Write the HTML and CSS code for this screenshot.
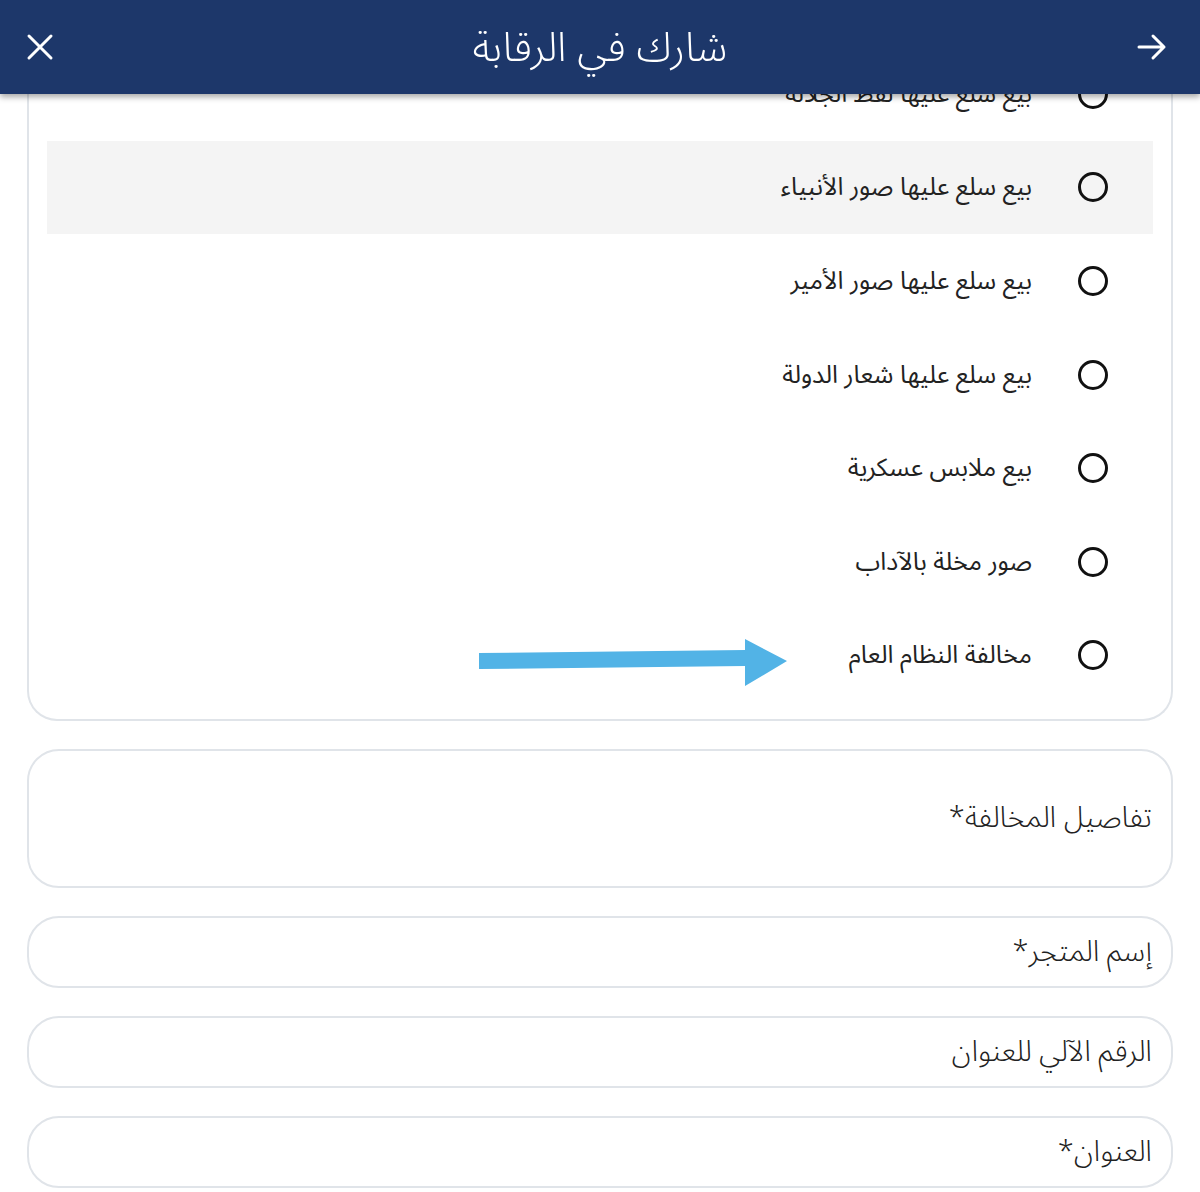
FILE: index.html
```html
<!DOCTYPE html>
<html lang="ar" dir="rtl">
<head>
<meta charset="utf-8">
<title>شارك في الرقابة</title>
<link rel="stylesheet" href="styles.css">
</head>
<body>
<header class="topbar">
  <button class="icon-btn back" aria-label="رجوع">
    <svg width="34" height="34" viewBox="0 0 34 34"><path d="M4 17H29M18 6L29 17L18 28" fill="none" stroke="#fff" stroke-width="3" stroke-linecap="round" stroke-linejoin="round"/></svg>
  </button>
  <h1 class="title">شارك في الرقابة</h1>
  <button class="icon-btn close" aria-label="إغلاق">
    <svg width="30" height="30" viewBox="0 0 30 30"><path d="M4 4L26 26M26 4L4 26" fill="none" stroke="#fff" stroke-width="3" stroke-linecap="round"/></svg>
  </button>
</header>

<main class="page">
  <section class="card">
    <div class="opt"><span class="radio"></span><span class="opt-text">بيع سلع عليها لفظ الجلالة</span></div>
    <div class="opt opt-active"><span class="radio"></span><span class="opt-text">بيع سلع عليها صور الأنبياء</span></div>
    <div class="opt"><span class="radio"></span><span class="opt-text">بيع سلع عليها صور الأمير</span></div>
    <div class="opt"><span class="radio"></span><span class="opt-text">بيع سلع عليها شعار الدولة</span></div>
    <div class="opt"><span class="radio"></span><span class="opt-text">بيع ملابس عسكرية</span></div>
    <div class="opt"><span class="radio"></span><span class="opt-text">صور مخلة بالآداب</span></div>
    <div class="opt"><span class="radio"></span><span class="opt-text">مخالفة النظام العام</span></div>
    <svg class="pointer" width="312" height="50" viewBox="0 0 312 50"><polygon points="0,14 266,11 266,0 308,22 266,47 266,27 0,30" fill="#52b3e6"/></svg>
  </section>

  <div class="field field-tall"><span class="label">تفاصيل المخالفة*</span></div>
  <div class="field"><span class="label">إسم المتجر*</span></div>
  <div class="field"><span class="label">الرقم الآلي للعنوان</span></div>
  <div class="field"><span class="label">العنوان*</span></div>
</main>
</body>
</html>
```
FILE: styles.css
```css
* { box-sizing: border-box; }
html, body { margin: 0; padding: 0; }
body {
  background: #fff;
  font-family: "Noto Sans Arabic", "DejaVu Sans", "Noto Sans", sans-serif;
  color: #1f1f1f;
  overflow: hidden;
}
.topbar {
  position: fixed;
  top: 0; left: 0; right: 0;
  height: 94px;
  background: #1d376a;
  display: grid;
  grid-template-columns: 1fr auto 1fr;
  align-items: center;
  padding: 0 30px 0 22px;
  box-shadow: 0 3px 6px rgba(0,0,0,0.35);
  z-index: 10;
}
.icon-btn {
  background: none;
  border: 0;
  padding: 0;
  width: 36px;
  height: 36px;
  display: flex;
  align-items: center;
  justify-content: center;
}
.back { justify-self: start; }
.close { justify-self: end; }
.title {
  margin: 0;
  color: #fff;
  font-weight: 300;
  font-size: 41px;
  line-height: 1;
  padding-top: 2px;
  transform: translateX(4px);
}
.page {
  display: flex;
  flex-direction: column;
  gap: 28px;
  padding: 0 27px;
}
.card {
  position: relative;
  border: 2px solid #e0e4e9;
  border-top: 0;
  border-radius: 0 0 30px 30px;
  padding: 47px 18px 17px;
}
.opt {
  height: 93.6px;
  display: flex;
  align-items: center;
  padding-right: 45px;
  gap: 46px;
}
.opt-active { background: #f4f4f4; }
.radio {
  width: 30px;
  height: 30px;
  border: 3px solid #111;
  border-radius: 50%;
  flex: none;
}
.opt-text {
  font-size: 25px;
  color: #222;
}
.pointer {
  position: absolute;
  left: 450px;
  top: 639px;
}
.field {
  border: 2px solid #e0e4e9;
  border-radius: 32px;
  height: 72px;
  display: flex;
  align-items: center;
  padding-right: 19px;
}
.field-tall { height: 139px; }
.label {
  font-size: 29px;
  font-weight: 300;
  color: #222;
  padding-bottom: 2px;
}
```
